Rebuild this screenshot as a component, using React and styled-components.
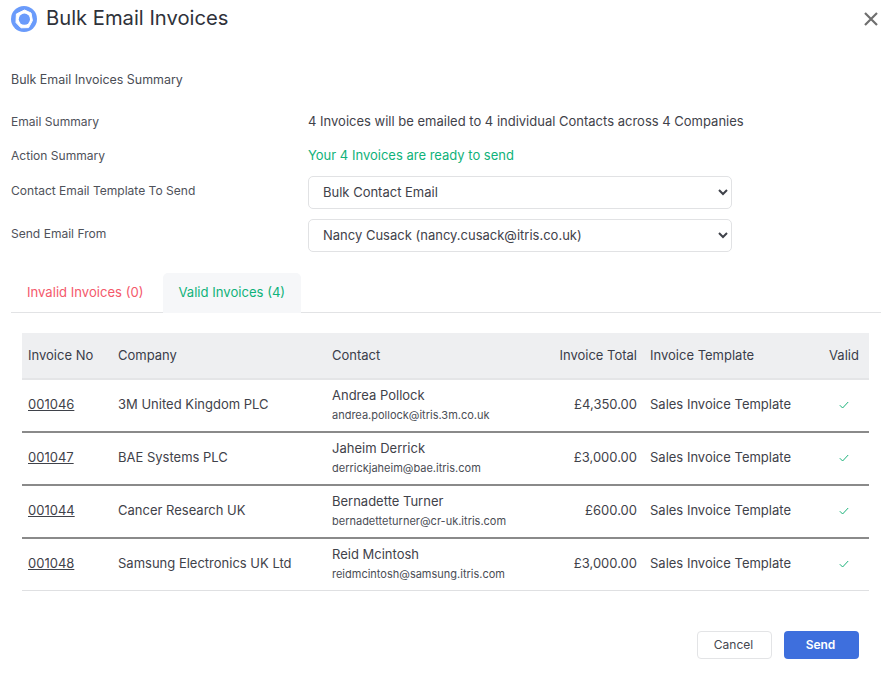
import React from "react";
import styled, { createGlobalStyle } from "styled-components";

const Global = createGlobalStyle`
  html, body { margin: 0; padding: 0; background: #fff; }
  body { font-family: Inter, "Liberation Sans", sans-serif; color: #3a3d45; }
`;
const Page = styled.div`
  width: 885px; height: 681px; overflow: hidden; box-sizing: border-box;
  padding: 0 4px 0 11px; display: flex; flex-direction: column;
`;
const Header = styled.header`
  height: 37px; display: flex; align-items: center; gap: 9px;
`;
const Title = styled.h1`
  margin: 0 0 2px; font-size: 20.2px; line-height: 35px; font-weight: 400; color: #2f323a; flex: 1;
`;
const Close = styled.button`
  border: 0; background: none; padding: 0; width: 16px; height: 16px; margin-right: 2px; margin-top: 1px; display: flex;
`;
const SectionTitle = styled.div`
  margin-top: 34px; font-size: 12.45px; line-height: 17px; color: #4a4d55;
`;
const Form = styled.div`
  margin-top: 16px; display: grid; grid-template-columns: 297px 424px;
  grid-auto-rows: auto; align-items: center;
`;
const Label = styled.div`
  font-size: 12.05px; line-height: 17px; color: #4f525a; align-self: center; margin-top: ${(p) => p.$offset || "0"};
`;
const Value = styled.div`
  font-size: 13px; line-height: 34px; height: 34px; white-space: nowrap; color: ${(p) => (p.$ok ? "#10b27a" : "#3f424a")};
`;
const Select = styled.select`
  width: 424px; height: 33px; margin: 4px 0 6px; box-sizing: border-box; padding: 0 5px 2px 10px;
  border: 1px solid #e1e2e4; border-radius: 5px; background: #fff; color: #3f424a;
  font-family: Inter, "Liberation Sans", sans-serif; font-size: 13px;
`;
const Tabs = styled.div`
  margin-top: 13px; height: 41px; display: flex; align-items: flex-end; gap: 4px; border-bottom: 1px solid #e2e3e5;
`;
const Tab = styled.div`
  height: 40px; margin-bottom: -1px; padding: 0 16px 0 ${(p) => (p.$active ? "15px" : "16px")};
  line-height: 38px; font-size: 13.1px; color: ${(p) => p.$color};
  background: ${(p) => (p.$active ? "#f6f7f9" : "transparent")}; border-radius: 5px 5px 0 0;
`;
const Table = styled.table`
  margin: 20px 0 0 11px; width: 847px; table-layout: fixed; border-collapse: collapse; font-size: 13px;
`;
const Head = styled.th`
  height: 43px; padding: 0 ${(p) => (p.$align === "right" ? "7px" : "6px")} 2px 6px; background: #eeeff1; border-bottom: 2px solid #e4e5e7; font-weight: 400;
  color: #3a3d4a; text-align: ${(p) => p.$align || "left"}; font-size: 13px;
`;
const Row = styled.tr`
  border-bottom: ${(p) => (p.$last ? "1px solid #dfe0e2" : "2px solid #8a8a8a")};
`;
const Cell = styled.td`
  height: 47px; padding: 0 ${(p) => (p.$align === "right" ? "7px" : "6px")} 4px 6px; color: #3f424a; text-align: ${(p) => p.$align || "left"};
`;
const ContactCell = styled.td`
  height: 50px; padding: 0 6px 1px; color: #3f424a;
`;
const InvoiceLink = styled.a`
  color: #3f424a; text-decoration: underline;
`;
const ContactName = styled.div`
  font-size: 13px; line-height: 18px; margin-top: -2px;
`;
const ContactEmail = styled.div`
  font-size: 11px; line-height: 15px; margin-top: 4px; color: #4a4d55;
`;
const Footer = styled.footer`
  margin-top: 40px; padding-right: 22px; display: flex; justify-content: flex-end; gap: 12px;
`;
const Button = styled.button`
  width: 75px; height: 28px; box-sizing: border-box; border-radius: 4px; padding: 0 2px 2px 0;
  font-family: Inter, "Liberation Sans", sans-serif; font-size: 12px;
  font-weight: ${(p) => (p.$primary ? 600 : 400)};
  color: ${(p) => (p.$primary ? "#fff" : "#44474f")};
  background: ${(p) => (p.$primary ? "#3e6fdd" : "#fff")};
  border: ${(p) => (p.$primary ? "0" : "1px solid #e3e4e6")};
`;

const Logo = () => (
  <svg width="26" height="26" viewBox="0 0 26 26">
    <circle cx="13" cy="13" r="13" fill="#6a9bfb" />
    <path
      d="M13.5 4 L20 7 L21.4 14.6 L17.6 21.6 L10 21.8 L5 16.6 L5.4 8 Z"
      fill="#fff" stroke="#fff" strokeWidth="1" strokeLinejoin="round"
    />
    <circle cx="13.4" cy="13.2" r="5.6" fill="#6a9bfb" />
  </svg>
);
const CloseIcon = () => (
  <svg width="16" height="16" viewBox="0 0 16 16">
    <path d="M2 2 L14 14 M14 2 L2 14" stroke="#6f6f6f" strokeWidth="2.2" fill="none" />
  </svg>
);
const Check = () => (
  <svg width="10" height="8" viewBox="0 0 10 8">
    <path d="M0.8 4.2 L3.6 7 L9.2 1" stroke="#1bb27a" strokeWidth="1" fill="none" />
  </svg>
);

const rows = [
  ["001046", "3M United Kingdom PLC", "Andrea Pollock", "andrea.pollock@itris.3m.co.uk", "£4,350.00"],
  ["001047", "BAE Systems PLC", "Jaheim Derrick", "derrickjaheim@bae.itris.com", "£3,000.00"],
  ["001044", "Cancer Research UK", "Bernadette Turner", "bernadetteturner@cr-uk.itris.com", "£600.00"],
  ["001048", "Samsung Electronics UK Ltd", "Reid Mcintosh", "reidmcintosh@samsung.itris.com", "£3,000.00"],
];

export default function App() {
  return (
    <Page>
      <Global />
      <Header>
        <Logo />
        <Title>Bulk Email Invoices</Title>
        <Close aria-label="Close"><CloseIcon /></Close>
      </Header>
      <SectionTitle>Bulk Email Invoices Summary</SectionTitle>
      <Form>
        <Label>Email Summary</Label>
        <Value>4 Invoices will be emailed to 4 individual Contacts across 4 Companies</Value>
        <Label>Action Summary</Label>
        <Value $ok>Your 4 Invoices are ready to send</Value>
        <Label $offset="-6px">Contact Email Template To Send</Label>
        <Select defaultValue="a"><option value="a">Bulk Contact Email</option></Select>
        <Label $offset="-6px">Send Email From</Label>
        <Select defaultValue="a"><option value="a">Nancy Cusack (nancy.cusack@itris.co.uk)</option></Select>
      </Form>
      <Tabs>
        <Tab $color="#f4596b">Invalid Invoices (0)</Tab>
        <Tab $active $color="#10b27a">Valid Invoices (4)</Tab>
      </Tabs>
      <Table>
        <colgroup>
          <col width="90" /><col width="214" /><col width="218" /><col width="100" /><col width="175" /><col width="50" />
        </colgroup>
        <thead>
          <tr>
            <Head>Invoice No</Head>
            <Head>Company</Head>
            <Head>Contact</Head>
            <Head $align="right">Invoice Total</Head>
            <Head>Invoice Template</Head>
            <Head $align="center">Valid</Head>
          </tr>
        </thead>
        <tbody>
          {rows.map((r, i) => (
            <Row key={r[0]} $last={i === rows.length - 1}>
              <Cell><InvoiceLink href="#">{r[0]}</InvoiceLink></Cell>
              <Cell>{r[1]}</Cell>
              <ContactCell>
                <ContactName>{r[2]}</ContactName>
                <ContactEmail>{r[3]}</ContactEmail>
              </ContactCell>
              <Cell $align="right">{r[4]}</Cell>
              <Cell>Sales Invoice Template</Cell>
              <Cell $align="center"><Check /></Cell>
            </Row>
          ))}
        </tbody>
      </Table>
      <Footer>
        <Button>Cancel</Button>
        <Button $primary>Send</Button>
      </Footer>
    </Page>
  );
}
